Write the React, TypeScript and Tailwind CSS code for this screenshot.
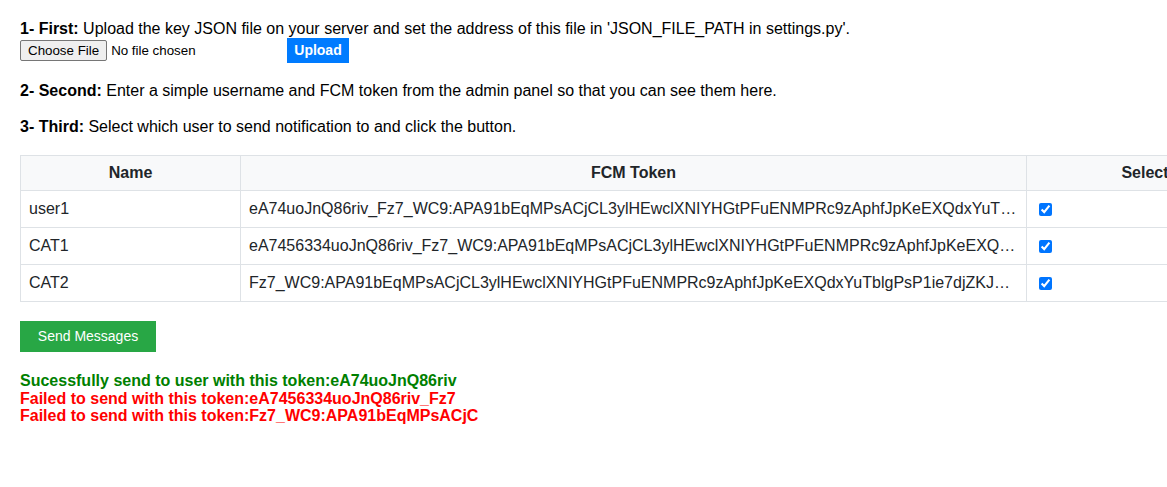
import React from "react"

const users = [
  {
    name: "user1",
    token:
      "eA74uoJnQ86riv_Fz7_WC9:APA91bEqMPsACjCL3ylHEwclXNIYHGtPFuENMPRc9zAphfJpKeEXQdxYuTblgPsP1ie7djZKJnQ86rivFz7WC9",
  },
  {
    name: "CAT1",
    token:
      "eA7456334uoJnQ86riv_Fz7_WC9:APA91bEqMPsACjCL3ylHEwclXNIYHGtPFuENMPRc9zAphfJpKeEXQdxYuTblgPsP1ie7djZKJnQ86riv",
  },
  {
    name: "CAT2",
    token:
      "Fz7_WC9:APA91bEqMPsACjCL3ylHEwclXNIYHGtPFuENMPRc9zAphfJpKeEXQdxYuTblgPsP1ie7djZKJ_eA74uoJnQ86riv",
  },
]

export default function App() {
  return (
    <div className="w-screen overflow-hidden bg-white">
      <div className="px-5 pt-5 pb-16 text-[16px] text-black font-['Liberation_Sans',Arial,sans-serif]">
        {/* Step 1 */}
        <p className="leading-[18px]">
          <b>1- First:</b> Upload the key JSON file on your server and set the address of this file in 'JSON_FILE_PATH in settings.py'.
        </p>
        <div className="flex items-center h-[25px]">
          <div className="flex items-center w-[267px] text-[13.33px]">
            <span className="h-[21px] px-[7px] flex items-center bg-[#efefef] border border-[#767676] rounded-[2px] text-black">
              Choose File
            </span>
            <span className="ml-[4px] text-black">No file chosen</span>
          </div>
          <button className="h-[25px] w-[62px] bg-[#007bff] text-white text-[14px] font-bold">Upload</button>
        </div>

        {/* Step 2 */}
        <p className="leading-[18px] mt-[19px]">
          <b>2- Second:</b> Enter a simple username and FCM token from the admin panel so that you can see them here.
        </p>

        {/* Step 3 */}
        <p className="leading-[18px] mt-[18px]">
          <b>3- Third:</b> Select which user to send notification to and click the button.
        </p>

        <table className="mt-[19px] w-[1243px] table-fixed border-collapse text-[#212529]">
          <colgroup>
            <col className="w-[220px]" />
            <col className="w-[786px]" />
            <col className="w-[237px]" />
          </colgroup>
          <thead>
            <tr className="h-[35px] bg-[#f8f9fa]">
              <th className="border border-[#dee2e6] font-bold text-center">Name</th>
              <th className="border border-[#dee2e6] font-bold text-center">FCM Token</th>
              <th className="border border-[#dee2e6] font-bold text-center">Select</th>
            </tr>
          </thead>
          <tbody>
            {users.map((u) => (
              <tr key={u.name} className="h-[37px]">
                <td className="border border-[#dee2e6] px-[8px]">{u.name}</td>
                <td className="border border-[#dee2e6] px-[8px] overflow-hidden text-ellipsis whitespace-nowrap">
                  {u.token}
                </td>
                <td className="border border-[#dee2e6] px-[8px]">
                  <input type="checkbox" defaultChecked className="align-middle m-[3px_3px_3px_4px] w-[13px] h-[13px] accent-[#0075ff]" />
                </td>
              </tr>
            ))}
          </tbody>
        </table>

        <button className="mt-[19px] h-[31px] w-[136px] bg-[#28a745] text-white text-[14px]">Send Messages</button>

        <div className="mt-[20px] font-bold leading-[17.5px]">
          <div className="text-[#008000]">Sucessfully send to user with this token:eA74uoJnQ86riv</div>
          <div className="text-[#ff0000]">Failed to send with this token:eA7456334uoJnQ86riv_Fz7</div>
          <div className="text-[#ff0000]">Failed to send with this token:Fz7_WC9:APA91bEqMPsACjC</div>
        </div>
      </div>
    </div>
  )
}
